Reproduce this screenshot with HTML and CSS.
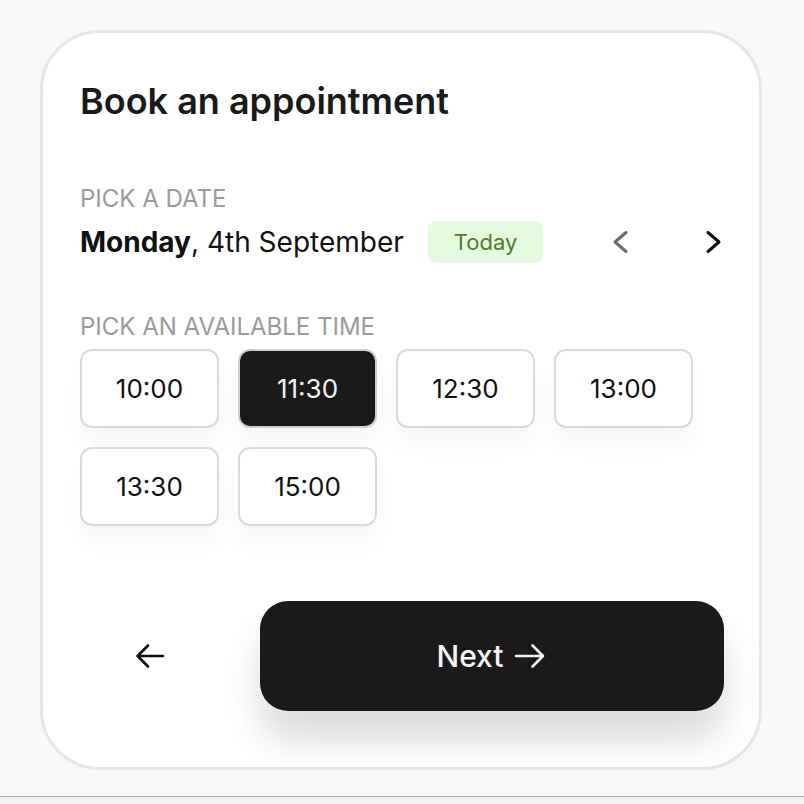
FILE: index.html
```html
<!DOCTYPE html>
<html lang="en">
<head>
<meta charset="utf-8">
<title>Book an appointment</title>
<link rel="stylesheet" href="styles.css">
</head>
<body>
<main class="page">
  <section class="card">
    <h1 class="title">Book an appointment</h1>

    <div class="label label-date">PICK A DATE</div>
    <div class="date-row">
      <span class="date-text"><b>Monday</b>, 4th September</span>
      <span class="badge">Today</span>
      <div class="date-nav">
        <button class="chev chev-prev" aria-label="Previous day">
          <svg width="20" height="24" viewBox="0 0 20 24"><polyline points="16,2.5 5,12 16,21.5" fill="none" stroke="currentColor" stroke-width="3" stroke-linecap="round" stroke-linejoin="round"/></svg>
        </button>
        <button class="chev chev-next" aria-label="Next day">
          <svg width="20" height="24" viewBox="0 0 20 24"><polyline points="4,2.5 15,12 4,21.5" fill="none" stroke="currentColor" stroke-width="3" stroke-linecap="round" stroke-linejoin="round"/></svg>
        </button>
      </div>
    </div>

    <div class="label label-time">PICK AN AVAILABLE TIME</div>
    <div class="times">
      <button class="slot">10:00</button>
      <button class="slot selected">11:30</button>
      <button class="slot">12:30</button>
      <button class="slot">13:00</button>
      <button class="slot">13:30</button>
      <button class="slot">15:00</button>
    </div>

    <div class="actions">
      <button class="back" aria-label="Back">
        <svg width="32" height="28" viewBox="0 0 32 28"><path d="M3.5 14H29M14 3.5L3.5 14L14 24.5" fill="none" stroke="currentColor" stroke-width="2.6" stroke-linecap="round" stroke-linejoin="round"/></svg>
      </button>
      <button class="next">
        <span>Next</span>
        <svg width="32" height="28" viewBox="0 0 32 28"><path d="M2 14H29M18.5 3.5L29 14L18.5 24.5" fill="none" stroke="currentColor" stroke-width="2.6" stroke-linecap="round" stroke-linejoin="round"/></svg>
      </button>
    </div>
  </section>
</main>
<div class="bottom-bar"></div>
</body>
</html>
```

FILE: styles.css
```css
* { box-sizing: border-box; }

html, body {
  margin: 0;
  padding: 0;
  background: #f8f8f8;
  font-family: Inter, "Noto Sans", "Liberation Sans", sans-serif;
  color: #161616;
}

.page {
  padding: 30px 0 0 40px;
  height: 796px;
}

.card {
  width: 722px;
  height: 740px;
  background: #ffffff;
  border: 3px solid #e6e6e6;
  border-radius: 60px;
  padding: 46px 35px 0 37px;
}

.title {
  margin: 0;
  font-size: 36px;
  line-height: 44px;
  font-weight: 600;
  color: #1a1a1a;
}

.label {
  font-size: 24px;
  line-height: 28px;
  color: #9b9b9b;
  font-weight: 400;
}

.label-date { margin-top: 62px; }
.label-time { margin-top: 50px; }

.date-row {
  margin-top: 8px;
  height: 42px;
  display: flex;
  align-items: center;
}

.date-text {
  font-size: 28px;
  color: #111;
}

.date-text b { font-weight: 700; }

.badge {
  margin-left: 24px;
  height: 42px;
  padding: 0 26px;
  display: flex;
  align-items: center;
  background: #e4fbdf;
  color: #4f7d2c;
  font-size: 22px;
  border-radius: 8px;
}

.date-nav {
  margin-left: auto;
  display: flex;
  gap: 74px;
}

.chev {
  border: 0;
  background: none;
  padding: 0;
  width: 20px;
  height: 24px;
  display: flex;
  cursor: pointer;
}

.chev-prev { color: #6b6b6b; }
.chev-next { color: #111; }

.times {
  margin-top: 8px;
  display: grid;
  grid-template-columns: repeat(4, 139px);
  grid-auto-rows: 79px;
  gap: 19px;
}

.slot {
  border: 2px solid #dadada;
  border-radius: 12px;
  background: #fff;
  font-family: inherit;
  font-size: 26px;
  color: #111;
  box-shadow: 0 18px 26px rgba(0, 0, 0, 0.04);
  cursor: pointer;
}

.slot.selected {
  background: #1a1a1a;
  color: #f2f2f2;
  border-color: #cfcfcf;
}

.actions {
  margin-top: 75px;
  display: flex;
  gap: 40px;
}

.back {
  width: 140px;
  height: 110px;
  border: 0;
  background: none;
  display: flex;
  align-items: center;
  justify-content: center;
  color: #111;
  cursor: pointer;
}

.next {
  flex: 1;
  height: 110px;
  border: 0;
  border-radius: 28px;
  background: #1a1a1a;
  color: #f4f4f4;
  font-family: inherit;
  font-size: 30px;
  font-weight: 500;
  display: flex;
  align-items: center;
  justify-content: center;
  gap: 10px;
  padding-right: 8px;
  box-shadow: 0 30px 40px rgba(0, 0, 0, 0.14);
  cursor: pointer;
}

.bottom-bar {
  height: 8px;
  border-top: 1px solid #a9a9a9;
  background: #f3f3f3;
}
```
